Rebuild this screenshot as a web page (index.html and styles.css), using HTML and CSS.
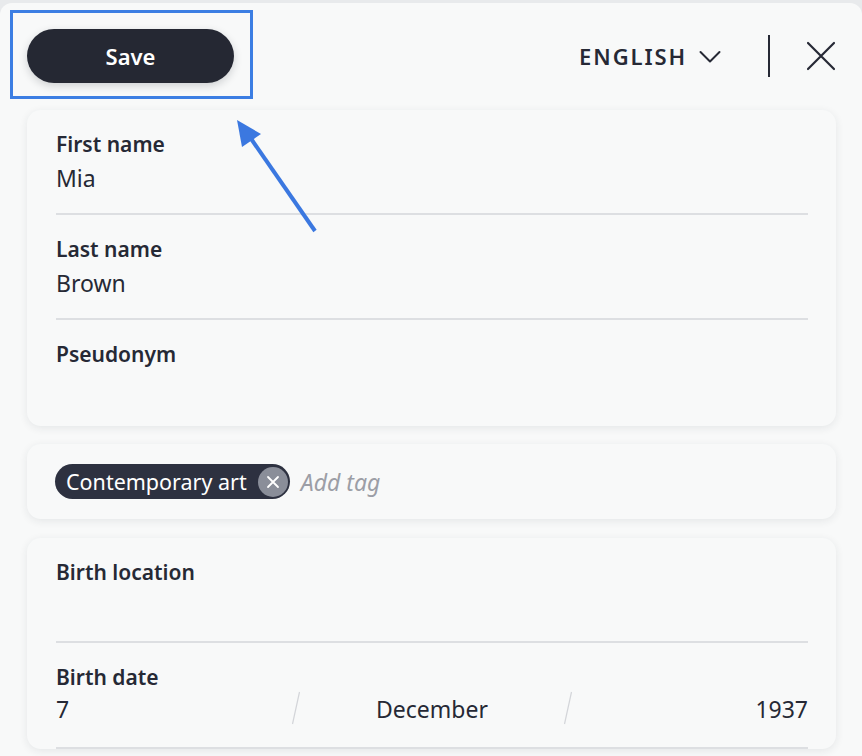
FILE: index.html
```html
<!DOCTYPE html>
<html>
<head>
<meta charset="utf-8">
<link rel="stylesheet" href="styles.css">
</head>
<body>
<div class="panel">
  <header class="topbar">
    <button class="save">Save</button>
    <div class="right">
      <div class="lang">ENGLISH
        <svg class="chev" width="22" height="14" viewBox="0 0 22 14"><path d="M1.5 2 L11 11.5 L20.5 2" fill="none" stroke="#262935" stroke-width="2" stroke-linecap="round" stroke-linejoin="round"/></svg>
      </div>
      <span class="vdiv"></span>
      <svg class="close" width="30" height="30" viewBox="0 0 30 30"><path d="M2 2 L28 28 M28 2 L2 28" stroke="#262935" stroke-width="2.2" stroke-linecap="round"/></svg>
    </div>
  </header>

  <section class="card">
    <div class="field">
      <div class="label">First name</div>
      <div class="value">Mia</div>
    </div>
    <div class="field">
      <div class="label">Last name</div>
      <div class="value">Brown</div>
    </div>
    <div class="field last">
      <div class="label">Pseudonym</div>
      <div class="value"></div>
    </div>
  </section>

  <section class="card tags">
    <span class="tag">Contemporary art
      <span class="tag-x"><svg width="14" height="14" viewBox="0 0 14 14"><path d="M2 2 L12 12 M12 2 L2 12" stroke="#fff" stroke-width="1.8" stroke-linecap="round"/></svg></span>
    </span>
    <span class="addtag">Add tag</span>
  </section>

  <section class="card">
    <div class="field">
      <div class="label">Birth location</div>
      <div class="value"></div>
    </div>
    <div class="field">
      <div class="label">Birth date</div>
      <div class="value date">
        <span class="d">7</span>
        <svg class="slash" width="20" height="34" viewBox="0 0 20 34"><path d="M13.5 1 L6.5 33" stroke="#d3d5d9" stroke-width="1.2"/></svg>
        <span class="m">December</span>
        <svg class="slash" width="20" height="34" viewBox="0 0 20 34"><path d="M13.5 1 L6.5 33" stroke="#d3d5d9" stroke-width="1.2"/></svg>
        <span class="y">1937</span>
      </div>
    </div>
  </section>

  <div class="highlight"></div>
  <svg class="arrow" width="100" height="130" viewBox="0 0 100 130">
    <line x1="87" y1="121" x2="17" y2="20" stroke="#3b78e0" stroke-width="4"/>
    <polygon points="9,10 33,24 14,37" fill="#3b78e0"/>
  </svg>
</div>
</body>
</html>
```

FILE: styles.css
```css
* { box-sizing: border-box; }
html, body { margin: 0; padding: 0; }
body {
  background: #e8eaec;
  font-family: "Noto Sans", "Open Sans", sans-serif;
  color: #262935;
  width: 862px;
  height: 756px;
  overflow: hidden;
}
.panel {
  position: relative;
  margin-top: 3px;
  background: #f8f9f9;
  border-radius: 12px 12px 0 0;
  height: 753px;
  overflow: hidden;
}
.topbar {
  display: flex;
  align-items: center;
  justify-content: space-between;
  padding: 26px 26px 27px 27px;
  height: 107px;
}
.save {
  width: 207px;
  height: 54px;
  border: none;
  border-radius: 27px;
  background: #252833;
  color: #fff;
  font-family: inherit;
  font-size: 22px;
  font-weight: 600;
  box-shadow: 0 3px 8px rgba(20, 25, 40, 0.18);
  padding: 0;
}
.right {
  display: flex;
  align-items: center;
}
.lang {
  display: flex;
  align-items: center;
  font-size: 22px;
  font-weight: 600;
  letter-spacing: 1.9px;
  color: #262935;
}
.chev { margin-left: 12px; margin-top: 2px; }
.vdiv {
  width: 2px;
  height: 42px;
  background: #262935;
  margin: 0 36px 0 47px;
}

.card {
  margin: 0 26px 0 27px;
  background: #f8f9f9;
  border-radius: 14px;
  box-shadow: 0 2px 9px rgba(30, 40, 60, 0.09);
  padding: 0 28px 0 29px;
}
.card + .card { margin-top: 18px; }
.card.tags + .card { margin-top: 19px; }
.field {
  padding: 21px 0 19px;
  border-bottom: 2px solid #dddfe2;
}
.field.last {
  border-bottom: none;
  padding-bottom: 22px;
}
.label {
  font-size: 21px;
  font-weight: 600;
  line-height: 27px;
}
.value {
  margin-top: 4px;
  font-size: 23px;
  line-height: 32px;
  height: 32px;
}
.date {
  display: grid;
  grid-template-columns: 230px 20px 1fr 20px 230px;
  align-items: center;
  margin-top: 2px;
  margin-bottom: 3px;
}
.date .m { text-align: center; }
.date .y { text-align: right; }
.slash { display: block; margin-top: -2px; }

.tags {
  display: flex;
  align-items: center;
  height: 75px;
  padding-left: 28px;
}
.tag {
  display: inline-flex;
  align-items: center;
  height: 35px;
  background: #2d3140;
  color: #fff;
  border-radius: 18px;
  font-size: 21.5px;
  padding: 0 2px 0 11px;
}
.tag-x {
  display: inline-flex;
  align-items: center;
  justify-content: center;
  width: 30px;
  height: 30px;
  border-radius: 50%;
  background: #8a8e99;
  margin-left: 11px;
}
.addtag {
  margin-left: 11px;
  font-size: 23px;
  font-style: italic;
  color: #9c9ea6;
}

.highlight {
  position: absolute;
  left: 10px;
  top: 7px;
  width: 243px;
  height: 89px;
  border: 3px solid #3c7ee3;
}
.arrow {
  position: absolute;
  left: 228px;
  top: 107px;
}
```
